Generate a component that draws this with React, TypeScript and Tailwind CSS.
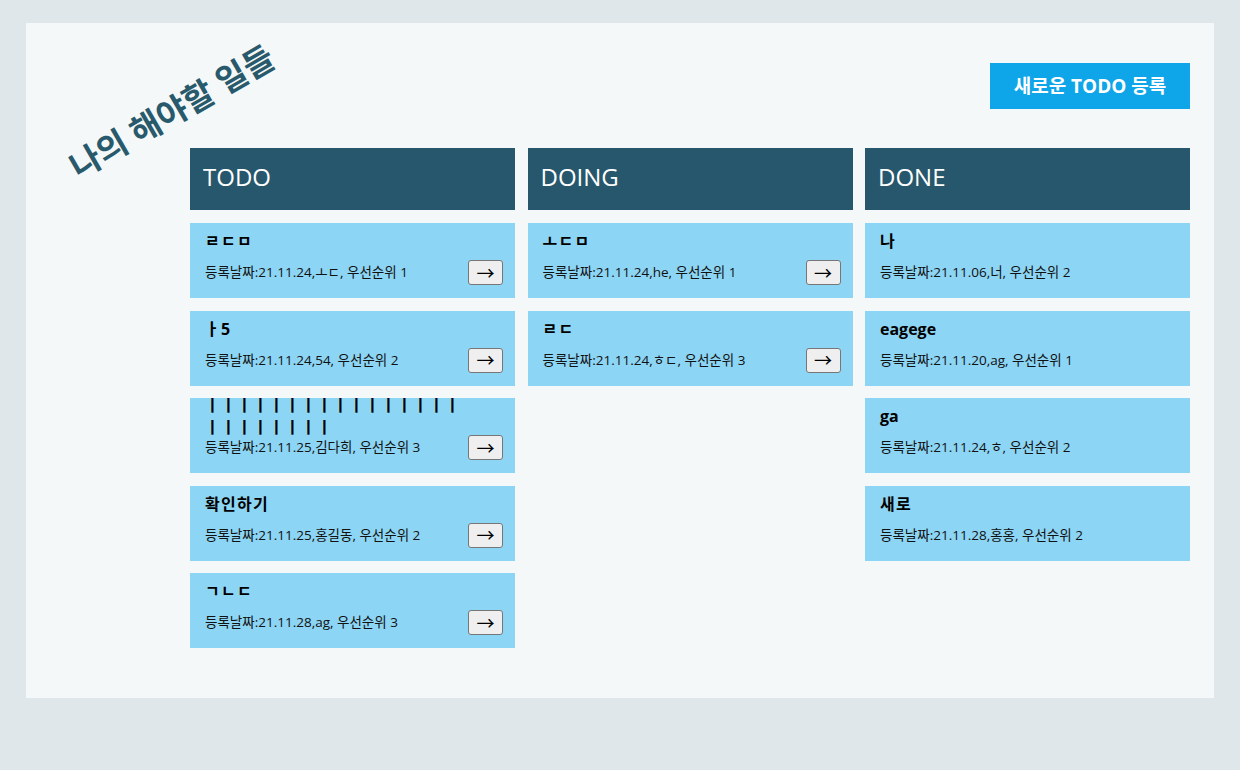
import React from 'react'

interface Task {
  title: string
  date: string
  author: string
  priority: number
}

const columns: { name: string; done?: boolean; tasks: Task[] }[] = [
  {
    name: 'TODO',
    tasks: [
      { title: 'ㄹㄷㅁ', date: '21.11.24', author: 'ㅗㄷ', priority: 1 },
      { title: 'ㅏ5', date: '21.11.24', author: '54', priority: 2 },
      { title: 'ㅣㅣㅣㅣㅣㅣㅣㅣㅣㅣㅣㅣㅣㅣㅣㅣㅣㅣㅣㅣㅣㅣㅣㅣ', date: '21.11.25', author: '김다희', priority: 3 },
      { title: '확인하기', date: '21.11.25', author: '홍길동', priority: 2 },
      { title: 'ㄱㄴㄷ', date: '21.11.28', author: 'ag', priority: 3 },
    ],
  },
  {
    name: 'DOING',
    tasks: [
      { title: 'ㅗㄷㅁ', date: '21.11.24', author: 'he', priority: 1 },
      { title: 'ㄹㄷ', date: '21.11.24', author: 'ㅎㄷ', priority: 3 },
    ],
  },
  {
    name: 'DONE',
    done: true,
    tasks: [
      { title: '나', date: '21.11.06', author: '너', priority: 2 },
      { title: 'eagege', date: '21.11.20', author: 'ag', priority: 1 },
      { title: 'ga', date: '21.11.24', author: 'ㅎ', priority: 2 },
      { title: '새로', date: '21.11.28', author: '홍홍', priority: 2 },
    ],
  },
]

const hasHangul = (s: string) => /[가-힣ㄱ-ㅣ]/.test(s)

function TaskCard({ task, done }: { task: Task; done?: boolean }) {
  return (
    <div className="h-[75px] bg-[#8dd5f4] pl-[15px] pr-[12px] pt-[7px]">
      {/* title box has a fixed height, long text overflows both ways */}
      <div className="h-[22px] flex items-center">
        <div
          className={`max-w-[268px] text-[16px] leading-[22px] font-bold text-black break-all ${
            hasHangul(task.title) ? 'tracking-[0.08em]' : ''
          }`}
        >
          {task.title}
        </div>
      </div>
      <div className="mt-[8px] h-[25px] flex items-center justify-between">
        <span className="text-[13.5px] text-[#111]">
          등록날짜:{task.date},{task.author}, 우선순위 {task.priority}
        </span>
        {!done && (
          <button className="w-[35px] h-[25px] bg-[#efefef] border border-[#767676] rounded-[3px] text-[18px] leading-none text-black flex items-center justify-center">
            →
          </button>
        )}
      </div>
    </div>
  )
}

export default function App() {
  return (
    <div
      className="min-h-[770px] bg-[#dfe7eb] pt-[23px] px-[26px]"
      style={{ fontFamily: '"Open Sans", "Noto Sans CJK KR", sans-serif' }}
    >
      <div className="relative h-[675px] bg-[#f5f8f9] pl-[164px] pr-[24px] pt-[40px]">
        <h1 className="absolute left-[8px] top-[67px] w-[276px] h-[44px] text-center text-[33px] leading-[44px] font-bold text-[#295a6c] -rotate-[30deg] whitespace-nowrap">
          나의 해야할 일들
        </h1>

        <div className="flex justify-end">
          <button className="w-[200px] h-[46px] bg-[#0ea5e9] text-white text-[19px] font-bold">
            새로운 TODO 등록
          </button>
        </div>

        <div className="mt-[39px] grid grid-cols-3 gap-x-[12.5px]">
          {columns.map(col => (
            <div key={col.name}>
              <div className="h-[62px] bg-[#27576c] flex items-center pl-[13px] pb-[4px] text-white text-[24px]">
                {col.name}
              </div>
              <div className="mt-[13px] flex flex-col gap-[12.5px]">
                {col.tasks.map((t, i) => (
                  <TaskCard key={i} task={t} done={col.done} />
                ))}
              </div>
            </div>
          ))}
        </div>
      </div>
    </div>
  )
}
